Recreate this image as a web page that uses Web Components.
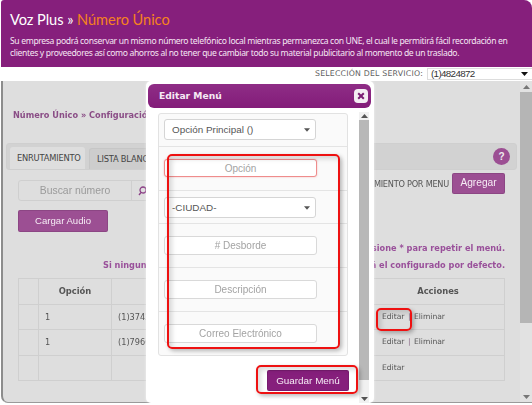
<!DOCTYPE html>
<html lang="es"><head><meta charset="utf-8"><title>Número Único</title>
<style>
html,body{margin:0;padding:0;background:#fff}
body{width:532px;height:405px;overflow:hidden;font-family:"Open Sans","Liberation Sans",sans-serif}
</style></head>
<body>
<voz-app></voz-app>
<script>
function def(name, css, html){
  customElements.define(name, class extends HTMLElement{
    constructor(){super();const r=this.attachShadow({mode:'open'});r.innerHTML='<style>'+css+'</style>'+html;}
  });
}
const ARROW_UP='<svg width="7" height="4" viewBox="0 0 7 4"><path d="M3.5 0L7 4H0z" fill="currentColor"/></svg>';
const ARROW_DN='<svg width="7" height="4" viewBox="0 0 7 4"><path d="M0 0h7L3.5 4z" fill="currentColor"/></svg>';

def('v-scroll',`
:host{display:flex;flex-direction:column;align-items:stretch;width:var(--w,12px);background:var(--track,#e4e4e4);flex:none}
.a{height:var(--ah,11px);display:flex;align-items:center;justify-content:center;color:var(--ac,#777);flex:none}
.th{flex:none;height:var(--thumb,100px);background:var(--tc,#b9b9b9)}
`,`<div class="a">${ARROW_UP}</div><div class="th"></div><div style="flex:1"></div><div class="a">${ARROW_DN}</div>`);

def('app-header',`
:host{display:block;height:67px;background:#861f7c;color:#fff;border-radius:3px 8px 0 0;margin-left:1px;box-sizing:border-box;padding:10px 0 0 9px}
h1{margin:0;font:400 14.6px/20px Lato,sans-serif;letter-spacing:-.05px;white-space:nowrap}
h1 span{color:#f58220}
p{margin:5px 0 0;font:400 8.6px/12px "Noto Sans",sans-serif;letter-spacing:-.35px;white-space:nowrap;color:#f5e6f3}
`,`<h1>Voz Plus » <span>Número Único</span></h1>
<p>Su empresa podrá conservar un mismo número telefónico local mientras permanezca con UNE, el cual le permitirá fácil recordación en<br>clientes y proveedores así como ahorros al no tener que cambiar todo su material publicitario al momento de un traslado.</p>`);

def('service-bar',`
:host{display:flex;justify-content:flex-end;align-items:center;height:14px;background:#fff;margin-left:1px;gap:4px}
.l{font:400 7.8px/14px "DejaVu Sans",sans-serif;letter-spacing:.2px;color:#5f5f5f;white-space:nowrap}
.s{width:105px;height:12px;box-sizing:border-box;border:1px solid #ddd;border-right:0;display:flex;align-items:center;justify-content:space-between;padding:0 4px 0 3px;font:400 9.8px/12px "Liberation Sans",sans-serif;letter-spacing:-.65px;color:#333;background:#fff}
.s svg{color:#111}
`,`<span class="l">SELECCIÓN DEL SERVICIO:</span><div class="s"><span>(1)4824872</span>${ARROW_DN}</div>`);

def('tab-bar',`
:host{display:flex;align-items:flex-end;gap:4px;height:27px;box-sizing:border-box;margin:0 3px 0 3px;padding:0 0 0 3px;background:#d2d2d2;border:1px solid #cfcfcf;border-radius:3px;position:relative}
.t{font:400 8.3px/22px "DejaVu Sans",sans-serif;letter-spacing:-.2px;height:22px;padding:0 7px;border-radius:3px 3px 0 0;color:#444;white-space:nowrap}
.t.on{background:#dedede;width:61px;text-align:center}
.t.off{background:#cdcdcd;border:1px solid #c6c6c6;border-bottom:0;height:20px;line-height:20px}
.h{position:absolute;right:6px;top:4px;width:17px;height:17px;border-radius:50%;background:#9c4f93;color:#eee;font:700 10px/17px "Liberation Sans",sans-serif;text-align:center}
`,`<div class="t on">ENRUTAMIENTO</div><div class="t off">LISTA BLANCA</div><div class="h">?</div>`);

def('action-btn',`
:host{display:inline-flex;align-items:center;justify-content:center;box-sizing:border-box;height:var(--h,22px);width:var(--wd,90px);background:var(--bg,#9c4f93);color:#f6ecf5;border-radius:2px;font:400 var(--fs,9.6px)/1 "Liberation Sans",sans-serif;border:1px solid rgba(0,0,0,.1);white-space:nowrap}
`,`<slot></slot>`);

def('search-box',`
:host{display:flex;width:135px;height:21px;box-sizing:border-box;border:1px solid #cfcfcf;border-radius:3px;overflow:hidden}
.i{width:112px;text-align:center;font:400 10.4px/19px "Liberation Sans",sans-serif;color:#9a9a9a;border-right:1px solid #cfcfcf}
.b{flex:1;display:flex;align-items:center;padding-left:6px}
`,`<div class="i">Buscar número</div><div class="b"><svg width="9" height="10" viewBox="0 0 9 10"><circle cx="5" cy="4" r="3" fill="none" stroke="#8a3f85" stroke-width="1.3"/><path d="M3 6.5L1 9" stroke="#8a3f85" stroke-width="1.3"/></svg></div>`);

def('data-table',`
:host{display:block;margin:0 0 0 15px}
table{border-collapse:collapse;width:487px;table-layout:fixed;font:400 8.2px/12px "DejaVu Sans",sans-serif;color:#555}
td,th{border:1px solid #cfcfcf;padding:0 6px;white-space:nowrap;overflow:hidden;text-align:left}
th{font:700 8.4px/12px "DejaVu Sans",sans-serif;color:#555;text-align:center;height:24.5px}
tbody td{height:24.5px}
td.x{padding-left:10px;font-size:7.6px}
.s{color:#8b6b88;padding:0 1px}
`,`<table><colgroup><col style="width:20px"><col style="width:73px"><col style="width:260px"><col></colgroup>
<thead><tr><th></th><th>Opción</th><th></th><th>Acciones</th></tr></thead>
<tbody>
<tr><td></td><td>1</td><td>(1)3742</td><td class="x">Editar <span class="s">|</span> Eliminar</td></tr>
<tr><td></td><td>1</td><td>(1)7960</td><td class="x">Editar <span class="s">|</span> Eliminar</td></tr>
<tr><td></td><td></td><td></td><td class="x">Editar</td></tr>
</tbody></table>`);

def('main-panel',`
:host{display:block;height:322px;box-sizing:border-box;background:#dedede;border-left:2px solid #8c8c8c;border-bottom:1px solid #9a9a9a;border-radius:0 0 0 7px;margin-left:1px;position:relative;overflow:hidden}
.wrap{display:flex;height:100%}
.c{flex:1;min-width:0}
.bc{height:62px;box-sizing:border-box;padding:27px 0 0 10px;font:700 8.2px/14px "DejaVu Sans",sans-serif;color:#8a4d86;white-space:nowrap}
.ctrl{display:flex;justify-content:space-between;margin:3px 15px 0 15px;height:62px}
.left{display:flex;flex-direction:column;gap:9px;padding-top:7px}
.right{display:flex;align-items:center;gap:3px;height:21px}
.right span{font:400 8.2px/12px "DejaVu Sans",sans-serif;color:#555;letter-spacing:-.25px;white-space:nowrap}
.msg{margin:0 15px 0 100px;font:700 8.2px/17px "DejaVu Sans",sans-serif;color:#99509a;white-space:nowrap}
.m1{text-align:right;margin-top:5px}
.m2{display:flex;justify-content:space-between}
v-scroll{--thumb:231px;--track:#e2e2e2;--tc:#b5b5b5}
data-table{margin-top:4px}
`,`<div class="wrap"><div class="c">
<div class="bc">Número Único » Configuración</div>
<tab-bar></tab-bar>
<div class="ctrl"><div class="left"><search-box></search-box><action-btn>Cargar Audio</action-btn></div>
<div class="right"><span>ENRUTAMIENTO POR MENU</span><action-btn style="--wd:53px;--h:21px;--fs:10.2px">Agregar</action-btn></div></div>
<div class="msg m1">Presione * para repetir el menú.</div>
<div class="msg m2"><span>Si ninguna</span><span>se usará el configurado por defecto.</span></div>
<data-table></data-table>
</div><v-scroll></v-scroll></div>`);

def('form-row',`
:host{display:block;box-sizing:border-box;height:var(--rh,44px);padding:var(--pt,12px) 0 0 5px;border-bottom:1px solid #e4e4e4}
`,`<slot></slot>`);

def('form-input',`
:host{display:block;box-sizing:border-box;width:153px;height:var(--ih,19px);border:1px solid var(--bc,#d9d9d9);border-radius:3px;background:#fff;box-shadow:var(--sh,none);text-align:center;font:400 10px/17px "Liberation Sans",sans-serif;color:#a3a3a3;white-space:nowrap}
`,`<slot></slot>`);

def('form-select',`
:host{display:flex;align-items:center;justify-content:space-between;box-sizing:border-box;width:152px;height:21px;border:1px solid #d5d5d5;border-radius:3px;background:#fff;padding:0 5px 0 7px;font:400 9.9px/1 "Liberation Sans",sans-serif;color:#555;white-space:nowrap}
`,`<slot></slot>${ARROW_DN.replace('width="7"','width="6"')}`);

def('edit-modal',`
:host{position:absolute;left:146px;top:81px;width:228px;height:322px;background:#fff;border-radius:5px;display:block;box-shadow:0 0 3px rgba(255,255,255,.6)}
.box{display:flex;flex-direction:column;height:100%}
header{flex:none;margin:3px 3px 0 2px;height:24px;box-sizing:border-box;border-radius:6px;background:linear-gradient(#8f2d86,#831c79);display:flex;align-items:center;justify-content:space-between;padding:0 3px 0 11px;color:#f6e9f4;font:700 9.2px/1 "DejaVu Sans",sans-serif}
.x{width:14px;height:14px;border-radius:4px;background:#f4eef3;display:flex;align-items:center;justify-content:center}
.body{flex:1;display:flex;min-height:0;margin-top:4px;padding-right:5px}
.main{flex:1;padding:1px 0 0 12px;display:flex;flex-direction:column;min-width:0}
.panel{width:190px;height:243px;box-sizing:border-box;border:1px solid #e2e2e2;border-radius:3px;background:#fafafa}
.foot{margin:14px 10px 0 0;display:flex;justify-content:flex-end}
v-scroll{--w:10px;--ah:8px;--thumb:260px;--track:#f1f1f1;--tc:#b8b8b8;--ac:#555}
action-btn{--bg:#861f7c;--wd:82px;--h:21px;--fs:9.9px}
form-row.a{--rh:33px;--pt:5px}
form-row.b{--rh:44px;--pt:12px}
form-row.c{--rh:33px;--pt:6px}
form-row.d{--rh:44px;--pt:12px}
form-row.e{--rh:44px;--pt:12px}
form-row.f{--rh:43px;--pt:12px}
.op{--bc:#ef8c8c;--ih:18px;--sh:0 0 2px rgba(230,60,60,.35)}
`,`<div class="box"><header><span>Editar Menú</span><span class="x"><svg width="8" height="8" viewBox="0 0 8 8"><path d="M1.2 1.2l5.6 5.6M6.8 1.2L1.2 6.8" stroke="#7a1d72" stroke-width="2"/></svg></span></header>
<div class="body"><div class="main"><div class="panel">
<form-row class="a"><form-select>Opción Principal ()</form-select></form-row>
<form-row class="b"><form-input class="op">Opción</form-input></form-row>
<form-row class="c"><form-select>-CIUDAD-</form-select></form-row>
<form-row class="d"><form-input># Desborde</form-input></form-row>
<form-row class="e"><form-input>Descripción</form-input></form-row>
<form-row class="f" style="border-bottom:0"><form-input>Correo Electrónico</form-input></form-row>
</div><div class="foot"><action-btn>Guardar Menú</action-btn></div></div>
<v-scroll></v-scroll></div></div>`);

def('red-mark',`
:host{position:absolute;box-sizing:border-box;border:2px solid #ee1111;border-radius:5px;box-shadow:2px 2px 4px rgba(0,0,0,.28),inset 3px 3px 5px rgba(0,0,0,.14);display:block}
`,``);

def('voz-app',`
:host{display:block;position:relative;width:532px;height:405px;overflow:hidden;filter:blur(.3px)}
`,`<app-header></app-header><service-bar></service-bar><main-panel></main-panel>
<edit-modal></edit-modal>
<red-mark style="left:167px;top:154px;width:173px;height:195px"></red-mark>
<red-mark style="left:256px;top:365px;width:102px;height:29px"></red-mark>
<red-mark style="left:376px;top:308px;width:36px;height:23px"></red-mark>`);
</script>
</body></html>
